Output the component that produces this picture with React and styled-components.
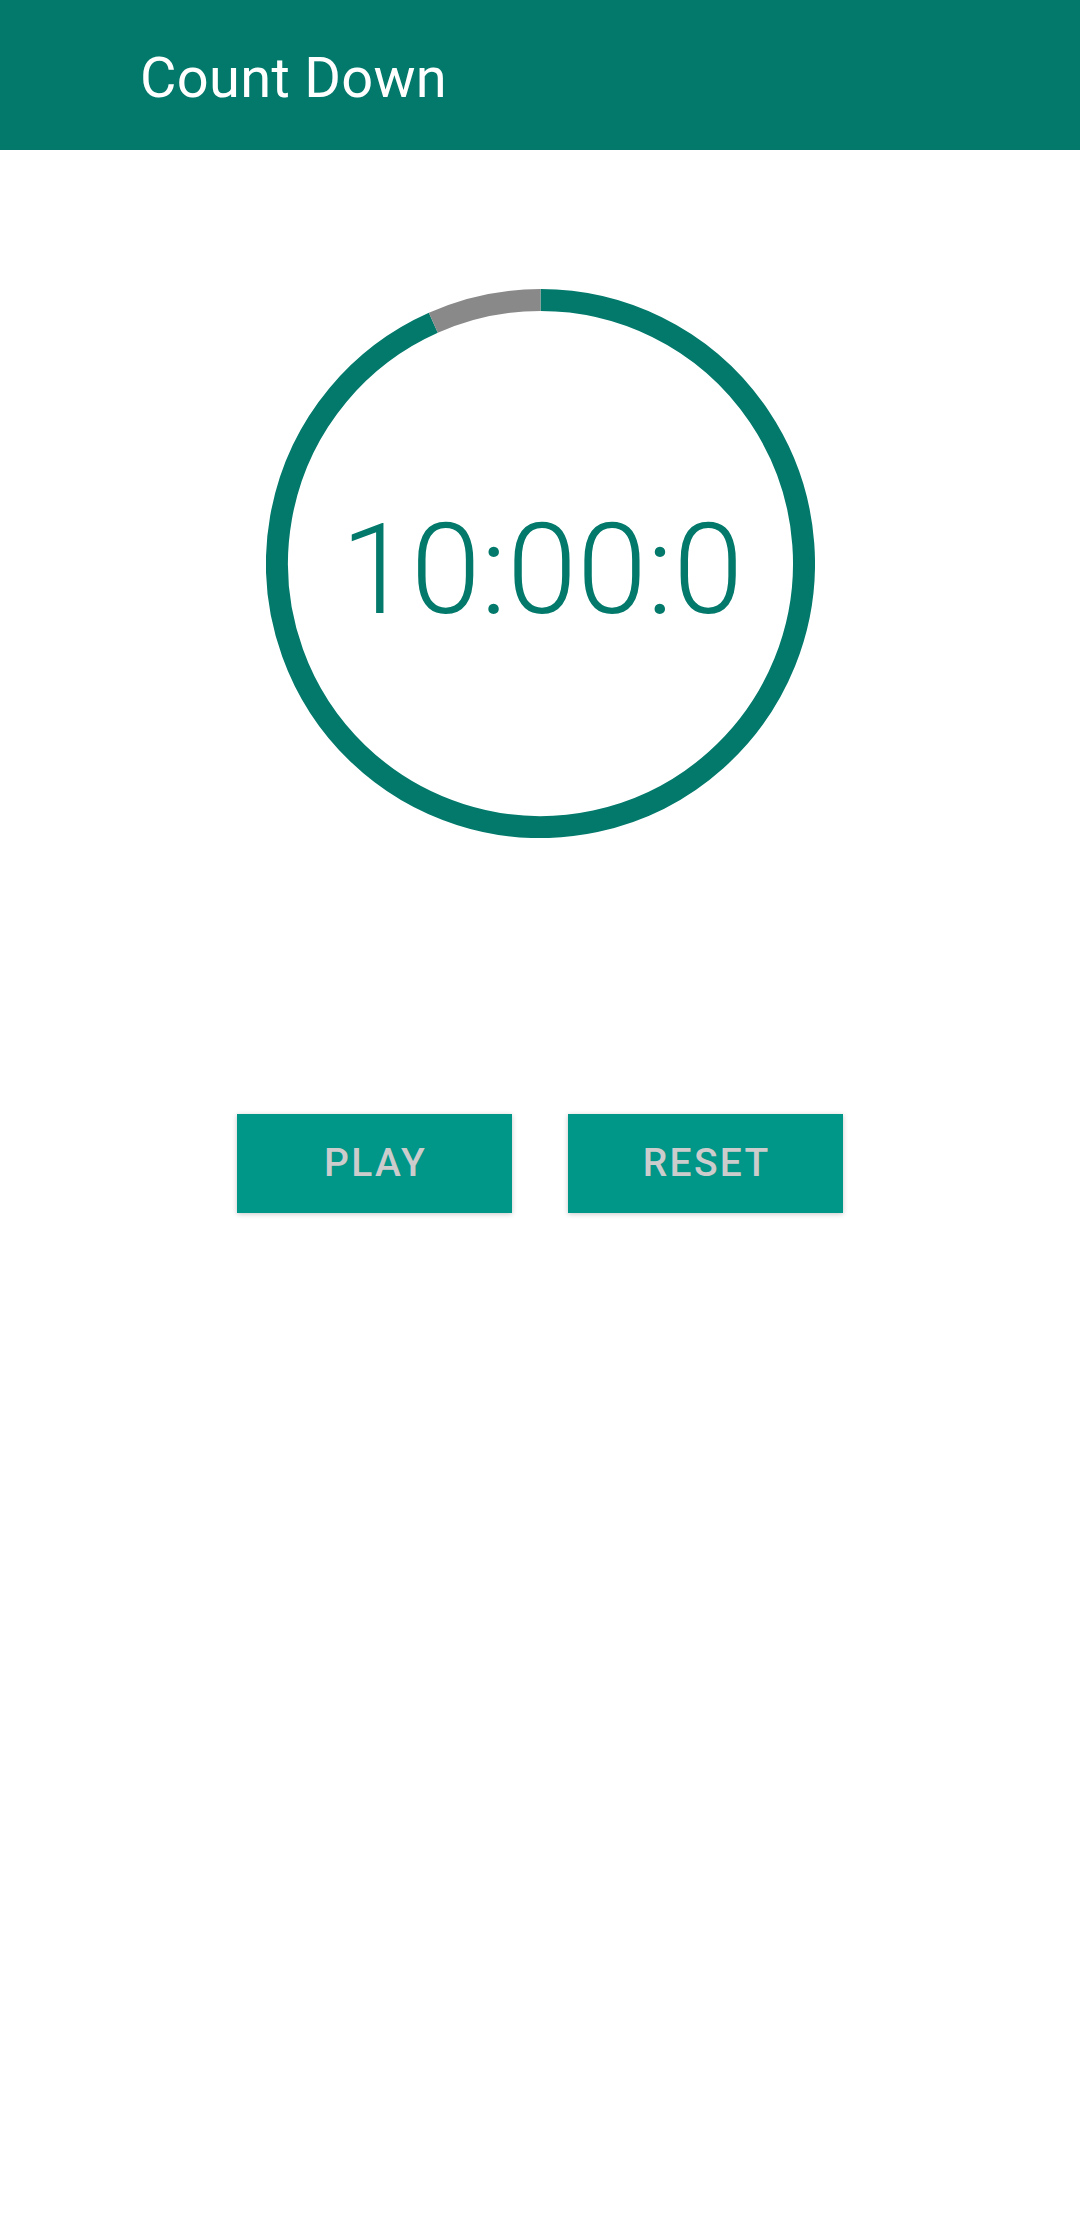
import React from "react";
import styled, { createGlobalStyle } from "styled-components";

const Global = createGlobalStyle`
  html, body { margin: 0; padding: 0; background: #ffffff; }
  body { font-family: Roboto, "Noto Sans", sans-serif; }
  * { box-sizing: border-box; }
`;

const Page = styled.div`
  width: 1080px;
  min-height: 2220px;
  display: flex;
  flex-direction: column;
  background: #ffffff;
`;

const AppBar = styled.header`
  height: 150px;
  background: #02796b;
  display: flex;
  align-items: center;
  padding-left: 140px;
  padding-top: 6px;
`;

const Title = styled.h1`
  margin: 0;
  font-family: Roboto, sans-serif;
  font-weight: 400;
  font-size: 56px;
  color: #ffffff;
  letter-spacing: 0.3px;
`;

const Content = styled.main`
  display: flex;
  flex-direction: column;
  align-items: center;
  padding-top: 139px;
`;

const Dial = styled.div`
  width: 549px;
  height: 549px;
  position: relative;
  display: flex;
  align-items: center;
  justify-content: center;
`;

const Ring = styled.svg`
  position: absolute;
  inset: 0;
`;

const Time = styled.div`
  position: relative;
  font-family: Roboto, sans-serif;
  font-weight: 300;
  font-size: 126px;
  letter-spacing: 0;
  color: #02796b;
  padding-top: 12px;
  padding-left: 4px;
  line-height: normal;
`;

const Buttons = styled.div`
  display: flex;
  gap: 56px;
  margin-top: 276px;
`;

const Button = styled.button`
  width: 275px;
  height: 99px;
  border: none;
  border-radius: 0;
  background: #009688;
  color: #cccccc;
  font-family: Roboto, sans-serif;
  font-weight: 500;
  font-size: 39px;
  letter-spacing: 0.06em;
  text-transform: uppercase;
  box-shadow: 0 1px 5px rgba(0, 0, 0, 0.22);
  display: flex;
  align-items: center;
  justify-content: center;
  padding: 0 0 2px 0.06em;
  cursor: pointer;
`;

function ProgressRing() {
  const c = 274.5;
  const r = 263.5;
  const deg = 24;
  const rad = (deg * Math.PI) / 180;
  const ex = c - r * Math.sin(rad);
  const ey = c - r * Math.cos(rad);
  return (
    <Ring width="549" height="549" viewBox="0 0 549 549">
      <path
        d={`M ${c} ${c - r} A ${r} ${r} 0 1 1 ${ex} ${ey}`}
        fill="none"
        stroke="#02796b"
        strokeWidth="22"
      />
      <path
        d={`M ${ex} ${ey} A ${r} ${r} 0 0 1 ${c} ${c - r}`}
        fill="none"
        stroke="#898989"
        strokeWidth="22"
      />
    </Ring>
  );
}

export default function App() {
  return (
    <Page>
      <Global />
      <AppBar>
        <Title>Count Down</Title>
      </AppBar>
      <Content>
        <Dial>
          <ProgressRing />
          <Time>10:00:0</Time>
        </Dial>
        <Buttons>
          <Button>Play</Button>
          <Button>Reset</Button>
        </Buttons>
      </Content>
    </Page>
  );
}
